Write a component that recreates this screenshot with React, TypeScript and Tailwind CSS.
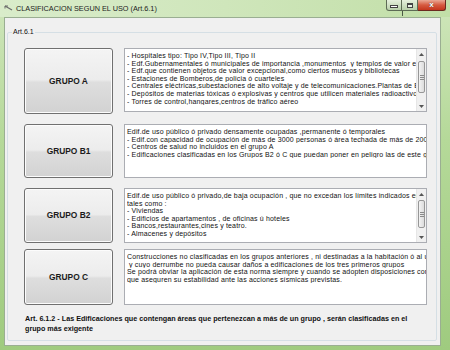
import React from "react";

const font = "font-['Liberation_Sans',Arial,sans-serif]";

function Scrollbar({ thumbTop, thumbH }: { thumbTop: number; thumbH: number }) {
  return (
    <div className="absolute right-0 top-0 bottom-0 w-[10px] bg-[#f0f0f0] border-l border-[#e6e6e6] flex flex-col">
      <div className="h-[10px] flex items-center justify-center">
        <svg width="5" height="3" viewBox="0 0 5 3">
          <path d="M0 3 L2.5 0 L5 3 Z" fill="#555" />
        </svg>
      </div>
      <div className="relative flex-1">
        <div
          className="absolute left-[1px] right-[1px] rounded-[2px] border border-[#979797] bg-[linear-gradient(90deg,#f3f3f3,#dcdcdc)] flex items-center justify-center"
          style={{ top: thumbTop, height: thumbH }}
        >
          <div className="flex flex-col gap-[1px]">
            <div className="w-[4px] h-[1px] bg-[#8a8a8a]" />
            <div className="w-[4px] h-[1px] bg-[#8a8a8a]" />
            <div className="w-[4px] h-[1px] bg-[#8a8a8a]" />
          </div>
        </div>
      </div>
      <div className="h-[10px] flex items-center justify-center">
        <svg width="5" height="3" viewBox="0 0 5 3">
          <path d="M0 0 L2.5 3 L5 0 Z" fill="#555" />
        </svg>
      </div>
    </div>
  );
}

function Row({
  label,
  lines,
  h,
  boxH,
  mt,
  scroll,
}: {
  label: string;
  lines: string[];
  h: number;
  boxH?: number;
  mt: string;
  scroll?: { top: number; h: number };
}) {
  return (
    <div className={`flex items-start gap-[11px] ${mt}`}>
      <div
        className="w-[89px] shrink-0 rounded-[3px] border border-[#707070] bg-[linear-gradient(180deg,#f4f4f4_0%,#ececec_48%,#dedede_52%,#d2d2d2_100%)] flex items-center justify-center shadow-[inset_0_0_0_1px_#fcfcfc]"
        style={{ height: h }}
      >
        <span className="text-[8.4px] font-bold text-[#1b1b1b] leading-none">{label}</span>
      </div>
      <div
        className="relative w-[303px] border border-[#abadb3] bg-white overflow-hidden"
        style={{ height: boxH ?? h }}
      >
        <div className={`pl-[2px] pt-[3px] ${scroll ? "pr-[10px]" : ""} text-[7px] tracking-[0.16px] leading-[7.6px] text-[#111] whitespace-pre overflow-hidden`}>
          {lines.map((l, i) => (
            <div key={i} className="overflow-hidden">
              {l}
            </div>
          ))}
        </div>
        {scroll && <Scrollbar thumbTop={scroll.top} thumbH={scroll.h} />}
      </div>
    </div>
  );
}

export default function App() {
  return (
    <div
      className={`${font} relative w-[450px] h-[350px] overflow-hidden bg-[linear-gradient(180deg,#cfe6bb_0%,#b5d999_40%,#9fcb7f_100%)] flex flex-col`}
    >
      {/* title bar */}
      <div className="h-[17px] shrink-0 flex items-center pl-[4px] relative bg-[linear-gradient(90deg,#d9ecca_0%,#cfe6bb_50%,#c2dfa8_100%)]">
        <svg width="9" height="6" viewBox="0 0 9 6" className="mr-[3px] mt-[-1px]">
          <path d="M1 1 L8 5" stroke="#6b6b6b" strokeWidth="1.2" />
          <path d="M1 1 L4 1 M1 1 L1 3.5" stroke="#6b6b6b" strokeWidth="1" />
        </svg>
        <span className="text-[7.3px] leading-none text-[#222] mt-[1px]">CLASIFICACION SEGUN EL USO (Art.6.1)</span>
        {/* window buttons */}
        <div className="absolute top-0 left-[386px] flex">
          <div className="w-[16px] h-[11px] border border-[#5d6b55] border-t-0 rounded-bl-[3px] bg-[linear-gradient(180deg,#e6f0dd,#b9d0aa)] flex items-end justify-center pb-[2px]">
            <div className="w-[6px] h-[1px] bg-white border border-[#444] box-content" />
          </div>
          <div className="w-[16px] h-[11px] border-b border-r border-[#5d6b55] bg-[linear-gradient(180deg,#e6f0dd,#b9d0aa)] flex items-center justify-center">
            <div className="w-[6px] h-[5px] border border-[#444] border-t-2 bg-white/60" />
          </div>
          <div className="w-[28px] h-[11px] border-b border-r border-[#6b2a20] rounded-br-[3px] bg-[linear-gradient(180deg,#eaa995_0%,#d65a40_50%,#c4361d_100%)] flex items-center justify-center">
            <span className="text-[8px] font-bold leading-none text-white mt-[-1px] [text-shadow:0_0_1px_#333]">x</span>
          </div>
        </div>
        <div className="absolute left-[402px] top-[11px] w-[1px] h-[5px] bg-[#4b5a45]" />
      </div>

      {/* client area */}
      <div className="ml-[4px] w-[437px] h-[329px] shrink-0 bg-[#f0f0f0] border border-[#9aae92]">
        <fieldset className="ml-[2px] mt-[10px] w-[430px] h-[313px] border border-[#d5dfe5] rounded-[2px] pl-[16px]">
          <legend className="ml-[-12px] px-[1px] text-[7px] leading-[8px] text-[#111]">Art.6.1</legend>
          <Row
            label="GRUPO A"
            h={66}
            boxH={64}
            mt="mt-[12px]"
            scroll={{ top: 2, h: 32 }}
            lines={[
              "- Hospitales tipo: Tipo IV,Tipo III, Tipo II",
              "- Edf.Gubernamentales ó municipales de importancia ,monumentos  y templos de valor excepcional",
              "- Edf.que contienen objetos de valor excepcional,como ciertos museos y bibliotecas",
              "- Estaciones de Bomberos,de policia ó cuarteles",
              "- Centrales eléctricas,subestaciones de alto voltaje y de telecomunicaciones.Plantas de Bombeo",
              "- Depósitos de materias tóxicas ó explosivas y centros que utilicen materiales radioactivos",
              "- Torres de control,hangares,centros de tráfico aéreo",
            ]}
          />
          <Row
            label="GRUPO B1"
            h={54}
            mt="mt-[10px]"
            lines={[
              "Edif.de uso público ó privado densamente ocupadas ,permanente ó temporales",
              "- Edif.con capacidad de ocupación de más de 3000 personas ó área techada de más de 20000 m2",
              "- Centros de salud no incluidos en el grupo A",
              "- Edificaciones clasificadas en los Grupos B2 ó C que puedan poner en peligro las de este grupo",
            ]}
          />
          <Row
            label="GRUPO B2"
            h={55}
            mt="mt-[10px]"
            scroll={{ top: 1, h: 28 }}
            lines={[
              "Edif.de uso público ó privado,de baja ocupación , que no excedan los límites indicados en el grupo B1",
              "tales como :",
              "- Viviendas",
              "- Edificios de apartamentos , de oficinas ú hoteles",
              "- Bancos,restaurantes,cines y teatro.",
              "- Almacenes y depósitos",
            ]}
          />
          <Row
            label="GRUPO C"
            h={56}
            mt="mt-[6px]"
            lines={[
              "Construcciones no clasificadas en los grupos anteriores , ni destinadas a la habitación ó al uso público",
              " y cuyo derrumbe no pueda causar daños a edificaciones de los tres primeros grupos",
              "Se podrá obviar la aplicación de esta norma siempre y cuando se adopten disposiciones constructivas",
              "que aseguren su estabilidad ante las acciones sísmicas previstas.",
            ]}
          />
          <div className="mt-[9px] ml-[1px] text-[7.2px] leading-[10px] font-bold text-[#111]">
            <div className="whitespace-nowrap">Art. 6.1.2 - Las Edificaciones que contengan áreas que pertenezcan a más de un grupo , serán clasificadas en el</div>
            <div>grupo más exigente</div>
          </div>
        </fieldset>
      </div>
    </div>
  );
}
